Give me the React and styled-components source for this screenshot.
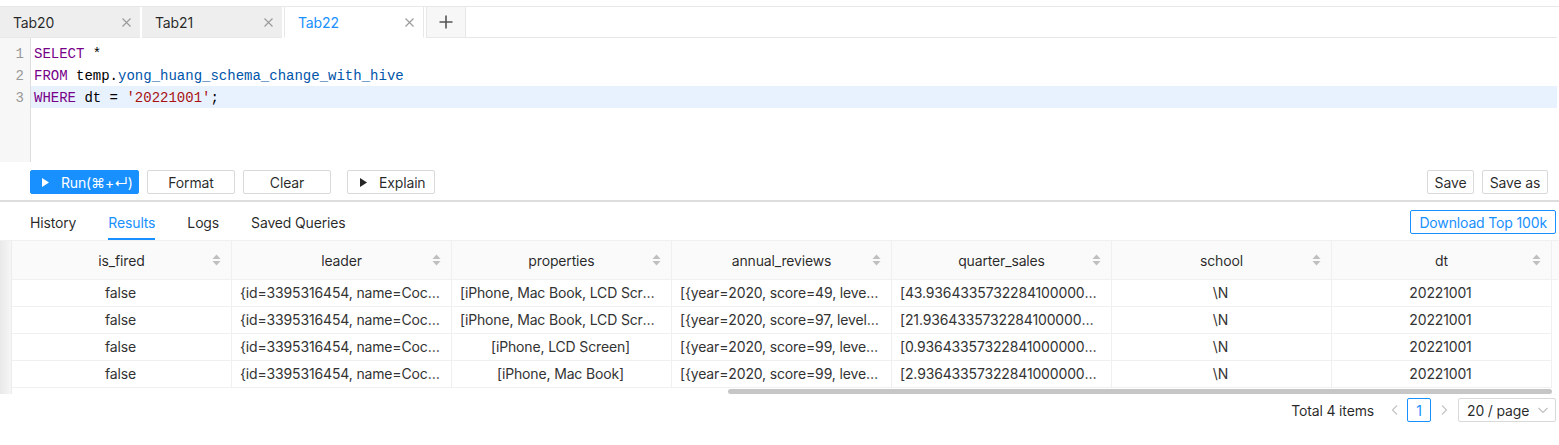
import React from 'react';
import styled, { createGlobalStyle } from 'styled-components';

const Global = createGlobalStyle`
  html, body { margin: 0; padding: 0; background: #fff; }
  body {
    font-family: Inter, "Noto Sans", "DejaVu Sans", sans-serif;
    font-size: 14px;
    letter-spacing: -0.15px;
    color: rgba(0, 0, 0, 0.85);
  }
  * { box-sizing: border-box; }
`;

const Page = styled.div`
  width: 1559px;
  height: 445px;
  overflow: hidden;
  padding-top: 6px;
`;

/* ---------- editor tabs ---------- */
const TabBar = styled.div`
  display: flex;
  height: 32px;
  border-top: 1px solid #e8e8e8;
  width: 1559px;
`;

const Tab = styled.div`
  width: 140px;
  height: 31px;
  margin-right: 2px;
  display: flex;
  align-items: center;
  justify-content: space-between;
  padding: 0 9px 0 13px;
  background: ${p => (p.$active ? '#fff' : '#eeeeee')};
  color: ${p => (p.$active ? '#1890ff' : 'rgba(0,0,0,0.85)')};
  border-bottom: 1px solid ${p => (p.$active ? '#fff' : '#e8e8e8')};
  border-left: ${p => (p.$active ? '1px solid #e8e8e8' : 'none')};
  border-right: ${p => (p.$active ? '1px solid #e8e8e8' : 'none')};
  font-size: 14px;
`;

const CloseX = styled.svg`
  width: 9px;
  height: 9px;
  stroke: #9a9a9a;
  stroke-width: 1.1;
`;

const AddTab = styled.div`
  width: 40px;
  height: 31px;
  display: flex;
  align-items: center;
  justify-content: center;
  background: #f7f7f7;
  border-left: 1px solid #e8e8e8;
  border-right: 1px solid #e8e8e8;
  border-bottom: 1px solid #e8e8e8;
`;

const TabFill = styled.div`
  flex: 1;
  height: 31px;
  border-bottom: 1px solid #e8e8e8;
  margin-right: 2px;
`;

/* ---------- code editor ---------- */
const Editor = styled.div`
  display: flex;
  height: 124px;
  width: 1557px;
  font-family: "Liberation Mono", "DejaVu Sans Mono", monospace;
  font-size: 14px;
  letter-spacing: 0;
`;

const Gutter = styled.div`
  width: 31px;
  background: #f7f7f7;
  border-right: 1px solid #dddddd;
  padding-top: 4px;
`;

const LineNo = styled.div`
  height: 22px;
  line-height: 20px;
  padding-top: 2px;
  text-align: right;
  padding-right: 6px;
  color: #999;
`;

const Code = styled.div`
  flex: 1;
  padding-top: 4px;
`;

const CodeLine = styled.div`
  height: 22px;
  line-height: 20px;
  padding-top: 2px;
  padding-left: 3px;
  white-space: pre;
  color: #000;
  background: ${p => (p.$active ? '#e8f2ff' : 'transparent')};
`;

const Kw = styled.span` color: #770088; `;
const Var = styled.span` color: #0055aa; `;
const Str = styled.span` color: #aa1111; `;

/* ---------- toolbar ---------- */
const Toolbar = styled.div`
  display: flex;
  align-items: flex-start;
  height: 40px;
  padding: 8px 11px 0 30px;
  border-bottom: 2px solid #dddddd;
`;

const Btn = styled.button`
  height: 24px;
  width: ${p => p.$w}px;
  margin-left: ${p => p.$ml || 0}px;
  display: inline-flex;
  align-items: center;
  justify-content: ${p => (p.$icon ? 'flex-start' : 'center')};
  gap: ${p => p.$gap || 0}px;
  padding: 0 0 0 ${p => p.$pl || 0}px;
  font-family: Inter, "DejaVu Sans", sans-serif;
  font-size: 14px;
  letter-spacing: -0.15px;
  border-radius: 2px;
  border: 1px solid ${p => (p.$primary ? '#1890ff' : '#d9d9d9')};
  background: ${p => (p.$primary ? '#1890ff' : '#fff')};
  color: ${p => (p.$primary ? '#fff' : 'rgba(0,0,0,0.85)')};
`;

const Spacer = styled.div` flex: 1; `;

const Play = styled.svg`
  width: 7px;
  height: 9px;
  fill: currentColor;
`;

/* ---------- result tabs ---------- */
const ResultNav = styled.div`
  display: flex;
  align-items: center;
  height: 39px;
  border-bottom: 1px solid #f0f0f0;
  padding: 0 3px 0 30px;
`;

const RTab = styled.div`
  height: 38px;
  display: flex;
  align-items: center;
  margin-right: 32px;
  color: ${p => (p.$active ? '#1890ff' : 'rgba(0,0,0,0.85)')};
  border-bottom: 2px solid ${p => (p.$active ? '#1890ff' : 'transparent')};
  padding-top: 4px;
`;

const Download = styled.button`
  height: 24px;
  padding: 0 8px;
  margin-top: 2px;
  border: 1px solid #1890ff;
  border-radius: 2px;
  background: #fff;
  color: #1890ff;
  font-family: Inter, sans-serif;
  font-size: 14px;
  letter-spacing: -0.15px;
`;

/* ---------- table ---------- */
const TableWrap = styled.div`
  display: flex;
  height: 153px;
`;

const LeftShade = styled.div`
  width: 12px;
  border-right: 1px solid #ececec;
  background: linear-gradient(to right, #e9e9e9, #f6f6f6);
`;

const TableMain = styled.div`
  flex: 1;
  display: flex;
  flex-direction: column;
`;

const Row = styled.div`
  display: grid;
  grid-template-columns: repeat(7, 220px) ${p => (p.$head ? '6px' : '')};
  height: ${p => (p.$head ? 39 : 27)}px;
  background: ${p => (p.$head ? '#fafafa' : '#fff')};
`;

const Cell = styled.div`
  border-right: 1px solid #f0f0f0;
  border-bottom: 1px solid #f0f0f0;
  padding: 0 10px 0 8px;
  line-height: 26px;
  text-align: center;
  white-space: nowrap;
  overflow: hidden;
  text-overflow: ellipsis;
  color: #333;
`;

const HeadCell = styled.div`
  position: relative;
  border-right: 1px solid #f0f0f0;
  border-bottom: 1px solid #f0f0f0;
  display: flex;
  align-items: center;
  justify-content: center;
  color: rgba(0, 0, 0, 0.85);
`;

const HeadGap = styled.div`
  border-bottom: 1px solid #f0f0f0;
`;

const Sorter = styled.svg`
  position: absolute;
  right: 10px;
  top: 13px;
  width: 9px;
  height: 12px;
  fill: #bfbfbf;
`;

const ScrollTrack = styled.div`
  height: 6px;
  padding-top: 1px;
`;

const Thumb = styled.div`
  height: 5px;
  margin-left: 716px;
  width: 824px;
  border-radius: 3px;
  background: #c6c6c6;
`;

/* ---------- pagination ---------- */
const Pager = styled.div`
  display: flex;
  align-items: center;
  justify-content: flex-end;
  height: 24px;
  margin-top: 4px;
  padding-right: 3px;
`;

const Total = styled.span`
  margin-right: 17px;
  color: rgba(0, 0, 0, 0.85);
`;

const Arrow = styled.svg`
  width: 8px;
  height: 10px;
  stroke: #c4c4c4;
  stroke-width: 1.2;
  fill: none;
  margin-left: ${p => p.$ml || 0}px;
  margin-right: ${p => p.$mr || 0}px;
`;

const PageNum = styled.div`
  width: 24px;
  height: 24px;
  border: 1px solid #1890ff;
  border-radius: 2px;
  color: #1890ff;
  display: flex;
  align-items: center;
  justify-content: center;
`;

const SizeSel = styled.div`
  width: 98px;
  height: 24px;
  border: 1px solid #d9d9d9;
  border-radius: 2px;
  display: flex;
  align-items: center;
  justify-content: space-between;
  padding: 0 7px 0 8px;
`;

const Caret = styled.svg`
  width: 10px;
  height: 7px;
  stroke: #bfbfbf;
  stroke-width: 1.1;
  fill: none;
`;

const columns = ['is_fired', 'leader', 'properties', 'annual_reviews', 'quarter_sales', 'school', 'dt'];

const rows = [
  ['false', '{id=3395316454, name=Coco, age=35}', '[iPhone, Mac Book, LCD Screen, Keyboard]', '[{year=2020, score=49, level=B}, {year=2021, score=88, level=A}]', '[43.936433573228410000000, 12.3, 88.1, 40.2]', '\\N', '20221001'],
  ['false', '{id=3395316454, name=Coco, age=35}', '[iPhone, Mac Book, LCD Screen, Keyboard]', '[{year=2020, score=97, level=A}, {year=2021, score=88, level=A}]', '[21.936433573228410000000, 12.3, 88.1, 40.2]', '\\N', '20221001'],
  ['false', '{id=3395316454, name=Coco, age=35}', '[iPhone, LCD Screen]', '[{year=2020, score=99, level=A}, {year=2021, score=88, level=A}]', '[0.936433573228410000000, 12.3, 88.1, 40.2]', '\\N', '20221001'],
  ['false', '{id=3395316454, name=Coco, age=35}', '[iPhone, Mac Book]', '[{year=2020, score=99, level=A}, {year=2021, score=88, level=A}]', '[2.936433573228410000000, 12.3, 88.1, 40.2]', '\\N', '20221001'],
];

const X = () => (
  <CloseX viewBox="0 0 9 9">
    <path d="M0.5 0.5 L8.5 8.5 M8.5 0.5 L0.5 8.5" />
  </CloseX>
);

const SortIcon = () => (
  <Sorter viewBox="0 0 9 12">
    <path d="M4.5 0.5 L8.5 5 L0.5 5 Z" />
    <path d="M0.5 7 L8.5 7 L4.5 11.5 Z" />
  </Sorter>
);

const PlayIcon = () => (
  <Play viewBox="0 0 7 9"><path d="M0 0 L7 4.5 L0 9 Z" /></Play>
);

export default function App() {
  return (
    <Page>
      <Global />
      <TabBar>
        <Tab>Tab20<X /></Tab>
        <Tab>Tab21<X /></Tab>
        <Tab $active>Tab22<X /></Tab>
        <AddTab>
          <svg width="14" height="14" viewBox="0 0 14 14" stroke="#555" strokeWidth="1.6">
            <path d="M7 0.5 V13.5 M0.5 7 H13.5" />
          </svg>
        </AddTab>
        <TabFill />
      </TabBar>

      <Editor>
        <Gutter>
          <LineNo>1</LineNo>
          <LineNo>2</LineNo>
          <LineNo>3</LineNo>
        </Gutter>
        <Code>
          <CodeLine><Kw>SELECT</Kw> *</CodeLine>
          <CodeLine><Kw>FROM</Kw> temp.<Var>yong_huang_schema_change_with_hive</Var></CodeLine>
          <CodeLine $active><Kw>WHERE</Kw> dt = <Str>'20221001'</Str>;</CodeLine>
        </Code>
      </Editor>

      <Toolbar>
        <Btn $primary $icon $w={109} $pl={11} $gap={12}>
          <PlayIcon />
          <span>Run(⌘+↵)</span>
        </Btn>
        <Btn $w={88} $ml={8}>Format</Btn>
        <Btn $w={88} $ml={8}>Clear</Btn>
        <Btn $icon $w={88} $ml={16} $pl={12} $gap={12}>
          <PlayIcon />
          <span>Explain</span>
        </Btn>
        <Spacer />
        <Btn $w={47}>Save</Btn>
        <Btn $w={66} $ml={8}>Save as</Btn>
      </Toolbar>

      <ResultNav>
        <RTab>History</RTab>
        <RTab $active>Results</RTab>
        <RTab>Logs</RTab>
        <RTab>Saved Queries</RTab>
        <Spacer />
        <Download>Download Top 100k</Download>
      </ResultNav>

      <TableWrap>
        <LeftShade />
        <TableMain>
          <Row $head>
            {columns.map(c => (
              <HeadCell key={c}>
                {c}
                <SortIcon />
              </HeadCell>
            ))}
            <HeadGap />
          </Row>
          {rows.map((r, i) => (
            <Row key={i}>
              {r.map((v, j) => (
                <Cell key={j}>{v}</Cell>
              ))}
            </Row>
          ))}
          <ScrollTrack>
            <Thumb />
          </ScrollTrack>
        </TableMain>
      </TableWrap>

      <Pager>
        <Total>Total 4 items</Total>
        <Arrow $mr={8} viewBox="0 0 8 10"><path d="M6 0.5 L1.5 5 L6 9.5" /></Arrow>
        <PageNum>1</PageNum>
        <Arrow $ml={9} $mr={10} viewBox="0 0 8 10"><path d="M2 0.5 L6.5 5 L2 9.5" /></Arrow>
        <SizeSel>
          <span>20 / page</span>
          <Caret viewBox="0 0 10 7"><path d="M0.5 1 L5 5.5 L9.5 1" /></Caret>
        </SizeSel>
      </Pager>
    </Page>
  );
}
